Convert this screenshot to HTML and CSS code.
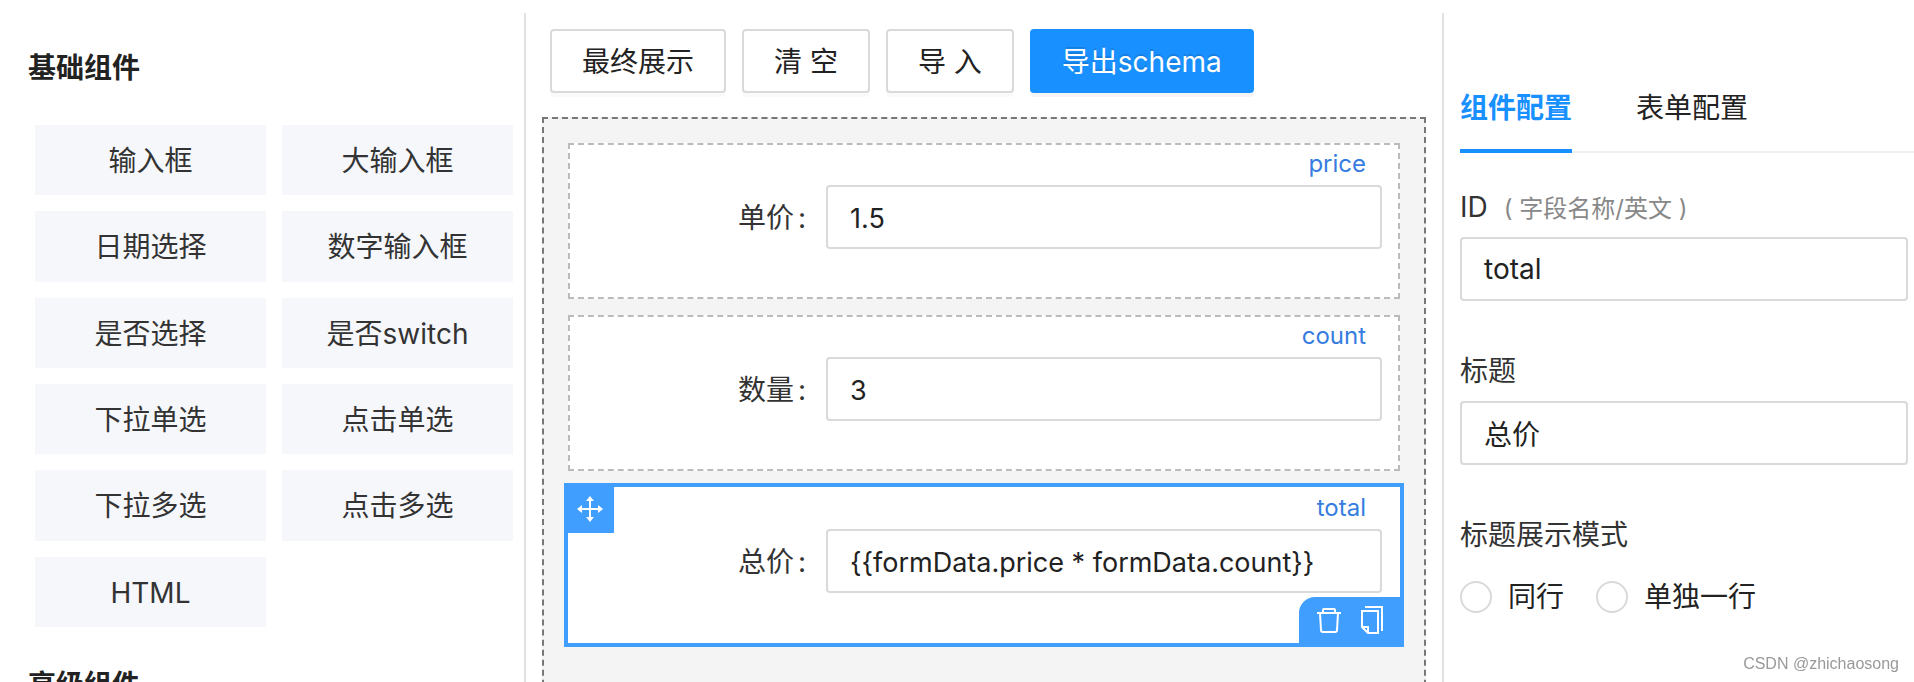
FILE: index.html
```html
<!DOCTYPE html>
<html lang="zh-CN">
<head>
    <meta charset="UTF-8">
    <title>表单设计器</title>
    <link rel="stylesheet" href="styles.css">
</head>
<body>
    <div class="designer">
        <aside class="sidebar">
            <h2 class="group-title">基础组件</h2>
            <div class="widget-list">
                <button type="button" class="widget">输入框</button>
                <button type="button" class="widget">大输入框</button>
                <button type="button" class="widget">日期选择</button>
                <button type="button" class="widget">数字输入框</button>
                <button type="button" class="widget">是否选择</button>
                <button type="button" class="widget">是否switch</button>
                <button type="button" class="widget">下拉单选</button>
                <button type="button" class="widget">点击单选</button>
                <button type="button" class="widget">下拉多选</button>
                <button type="button" class="widget">点击多选</button>
                <button type="button" class="widget">HTML</button>
            </div>
            <h2 class="group-title">高级组件</h2>
        </aside>

        <main class="center">
            <div class="toolbar">
                <button type="button" class="btn">最终展示</button>
                <button type="button" class="btn">清 空</button>
                <button type="button" class="btn">导 入</button>
                <button type="button" class="btn btn-primary">导出schema</button>
            </div>
            <div class="canvas">
                <div class="card">
                    <div class="card-id">price</div>
                    <div class="form-row">
                        <label class="form-label" for="price">单价</label>
                        <input type="text" class="input" id="price" value="1.5">
                    </div>
                </div>
                <div class="card">
                    <div class="card-id">count</div>
                    <div class="form-row">
                        <label class="form-label" for="count">数量</label>
                        <input type="text" class="input" id="count" value="3">
                    </div>
                </div>
                <div class="card selected">
                    <div class="card-id">total</div>
                    <div class="form-row">
                        <label class="form-label" for="total">总价</label>
                        <input type="text" class="input" id="total" value="{{formData.price * formData.count}}">
                    </div>
                    <button type="button" class="move" aria-label="移动">
                        <svg width="26" height="26" viewBox="0 0 26 26">
                            <path d="M13 4v18M4 13h18" stroke="#fff" stroke-width="2"/>
                            <path d="M13 0l4 5H9zM13 26l4-5H9zM0 13l5-4v8zM26 13l-5-4v8z" fill="#fff"/>
                        </svg>
                    </button>
                    <div class="actions">
                        <button type="button" class="action" aria-label="删除">
                            <svg width="24" height="26" viewBox="0 0 24 26" fill="none" stroke="#fff" stroke-width="2" stroke-linejoin="round">
                                <path d="M0 6h24"/>
                                <path d="M6 6V3q0-1 1-1h10q1 0 1 1v3"/>
                                <path d="M3 6l1 17q0 2 2 2h12q2 0 2-2l1-17"/>
                            </svg>
                        </button>
                        <button type="button" class="action" aria-label="复制">
                            <svg width="22" height="28" viewBox="0 0 22 28" fill="none" stroke="#fff" stroke-width="2">
                                <path d="M4 1h17v24"/>
                                <path d="M1 5h16v22H7l-6-6z"/>
                                <path d="M1 21h6v6"/>
                            </svg>
                        </button>
                    </div>
                </div>
            </div>
        </main>

        <aside class="settings">
            <nav class="tabs">
                <a href="#widget" class="tab active">组件配置</a>
                <a href="#form" class="tab">表单配置</a>
            </nav>
            <div class="field">
                <label class="field-label" for="field-id">ID<span class="hint">( 字段名称/英文 )</span></label>
                <input type="text" class="input" id="field-id" value="total">
            </div>
            <div class="field">
                <label class="field-label" for="field-title">标题</label>
                <input type="text" class="input" id="field-title" value="总价">
            </div>
            <div class="field" role="radiogroup" aria-labelledby="mode-label">
                <div class="field-label" id="mode-label">标题展示模式</div>
                <div class="radios">
                    <label class="radio"><input type="radio" name="mode">同行</label>
                    <label class="radio"><input type="radio" name="mode">单独一行</label>
                </div>
            </div>
        </aside>
    </div>
    <div class="watermark">CSDN @zhichaosong</div>
</body>
</html>
```
FILE: styles.css
```css
* {
    box-sizing: border-box;
}
body {
    margin: 0;
    height: 100vh;
    overflow: hidden;
    background: #fff;
    color: #222;
    font-family: Inter, "Noto Sans CJK SC", sans-serif;
    font-size: 28px;
    line-height: 44px;
}
button,
input {
    font: inherit;
    color: inherit;
}
button {
    cursor: pointer;
}
.designer {
    display: grid;
    grid-template-columns: 524px 1fr 470px;
    height: 100%;
    padding-top: 13px;
}

/* 左侧组件列表 */
.sidebar {
    padding: 33px 11px 0 28px;
}
.group-title {
    margin: 0 0 35px;
    font-size: 28px;
    font-weight: bold;
}
.widget-list {
    display: grid;
    grid-template-columns: 1fr 1fr;
    gap: 16px;
    min-height: 502px;
    margin: 0 0 36px 7px;
}
.widget {
    padding: 2px 0 0;
    border: none;
    background: #f6f7fb;
    color: #333;
}

/* 中间画布 */
.center {
    display: flex;
    flex-direction: column;
    padding: 16px 16px 0;
    border-left: 2px solid #e0e0e0;
    border-right: 2px solid #e0e0e0;
}
.toolbar {
    display: flex;
    gap: 16px;
    margin: 0 8px 24px;
}
.btn {
    height: 64px;
    padding: 2px 30px 0;
    border: 2px solid #d9d9d9;
    border-radius: 4px;
    background: #fff;
    box-shadow: 0 4px 0 rgba(0, 0, 0, 0.02);
}
.btn-primary {
    border-color: #1890ff;
    background: #1890ff;
    color: #fff;
    text-shadow: 0 -2px 0 rgba(0, 0, 0, 0.12);
    box-shadow: 0 4px 0 rgba(0, 0, 0, 0.04);
}
.canvas {
    display: flex;
    flex: 1 0 800px;
    flex-direction: column;
    gap: 16px;
    padding: 24px;
    border: 2px dashed #777;
    background: #f4f4f4;
}
.card {
    position: relative;
    padding: 0 16px 48px;
    border: 2px dashed #bbb;
    background: #fff;
}
.card-id {
    margin-bottom: 2px;
    padding-right: 16px;
    color: #367ddf;
    font-size: 24px;
    line-height: 38px;
    text-align: right;
}
.form-row {
    display: grid;
    grid-template-columns: 240px 1fr;
    align-items: center;
}
.form-label {
    padding-top: 2px;
    color: #333;
    text-align: right;
}
.form-label::after {
    content: ":";
    margin: 0 20px 0 4px;
}
.input {
    width: 100%;
    height: 64px;
    padding: 0 22px;
    border: 2px solid #d9d9d9;
    border-radius: 4px;
    background: #fff;
}
.form-row .input {
    padding-top: 2px;
    font-size: 27px;
}

/* 选中的组件 */
.selected {
    border-color: transparent;
    outline: 4px solid #409eff;
}
.move {
    position: absolute;
    top: -2px;
    left: -2px;
    display: flex;
    align-items: center;
    justify-content: center;
    width: 46px;
    height: 46px;
    padding: 0 2px 2px 0;
    border: none;
    background: #409eff;
}
.actions {
    position: absolute;
    right: -2px;
    bottom: -2px;
    display: flex;
    align-items: center;
    gap: 20px;
    height: 46px;
    padding: 0 17px 0 18px;
    border-top-left-radius: 16px;
    background: #409eff;
}
.action {
    display: flex;
    padding: 0;
    border: none;
    background: none;
}

/* 右侧配置面板 */
.settings {
    padding: 48px 6px 0 16px;
}
.tabs {
    display: flex;
    gap: 64px;
    margin: 0 -6px 32px 0;
    box-shadow: inset 0 -2px 0 #f0f0f0;
}
.tab {
    padding: 25px 0 19px;
    border-bottom: 4px solid transparent;
    color: #222;
    text-decoration: none;
}
.tab.active {
    border-color: #1890ff;
    color: #1890ff;
    font-weight: 600;
}
.field {
    margin-bottom: 48px;
}
.field-label {
    display: block;
    margin-bottom: 8px;
    color: #333;
}
.hint {
    margin-left: 16px;
    color: #888;
    font-size: 24px;
    line-height: 24px;
}
.radios {
    display: flex;
    align-items: center;
    gap: 32px;
    height: 64px;
}
.radio {
    display: flex;
    align-items: center;
    gap: 16px;
}
.radio input {
    appearance: none;
    width: 32px;
    height: 32px;
    margin: 0;
    border: 2px solid #d9d9d9;
    border-radius: 50%;
    background: #fff;
}
.radio input:checked {
    border: 10px solid #1890ff;
}
.watermark {
    position: fixed;
    right: 15px;
    bottom: 7px;
    color: #999;
    font-family: "Liberation Sans", Arial, sans-serif;
    font-size: 16px;
    line-height: 22px;
}
```
